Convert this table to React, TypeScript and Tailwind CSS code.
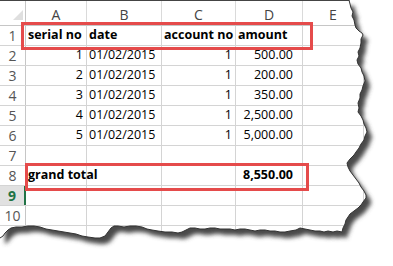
import React from "react";

const cols = [
  { w: "w-[61px]" },
  { w: "w-[75px]" },
  { w: "w-[74px]" },
  { w: "w-[67px]" },
  { w: "w-[61px]" },
];

type Cell = { t: string; align?: "l" | "r"; bold?: boolean; pr?: string };

const e: Cell = { t: "" };

const rows: Cell[][] = [
  [
    { t: "serial no", bold: true },
    { t: "date", bold: true },
    { t: "account no", bold: true },
    { t: "amount", bold: true },
    e,
  ],
  [{ t: "1", align: "r" }, { t: "01/02/2015" }, { t: "1", align: "r" }, { t: "500.00", align: "r", pr: "pr-[9px]" }, e],
  [{ t: "2", align: "r" }, { t: "01/02/2015" }, { t: "1", align: "r" }, { t: "200.00", align: "r", pr: "pr-[9px]" }, e],
  [{ t: "3", align: "r" }, { t: "01/02/2015" }, { t: "1", align: "r" }, { t: "350.00", align: "r", pr: "pr-[9px]" }, e],
  [{ t: "4", align: "r" }, { t: "01/02/2015" }, { t: "1", align: "r" }, { t: "2,500.00", align: "r", pr: "pr-[9px]" }, e],
  [{ t: "5", align: "r" }, { t: "01/02/2015" }, { t: "1", align: "r" }, { t: "5,000.00", align: "r", pr: "pr-[9px]" }, e],
  [e, e, e, e, e],
  [{ t: "grand total", bold: true }, e, e, { t: "8,550.00", align: "r", bold: true, pr: "pr-[9px]" }, e],
  [e, e, e, e, e],
  [e, e, e, e, e],
  [e, e, e, e, e],
];

const edge: [number, number][] = [
  [349, 0], [350, 4], [351, 8], [353, 12], [352, 16], [354, 20], [355, 25], [356, 28], [359, 31], [362, 33], [363, 35],
  [361, 39], [361, 43], [360, 48], [358, 52], [359, 56], [357, 60], [358, 64], [361, 68], [362, 72], [364, 76], [365, 81],
  [363, 86], [362, 90], [360, 94], [360, 98], [358, 103], [359, 108], [358, 112], [361, 116], [363, 120], [364, 124], [366, 128],
  [367, 132], [365, 136], [364, 140], [361, 144], [359, 148], [356, 152], [354, 155], [350, 159], [347, 163], [348, 167],
  [350, 171], [353, 175], [356, 179], [359, 183], [361, 187], [364, 191], [366, 195], [366, 198], [363, 202], [361, 205],
  [358, 208], [354, 211], [350, 214], [348, 217], [346, 220], [345, 224], [343, 228], [342, 232],
  [337, 231], [333, 232], [328, 231], [324, 232], [320, 231], [315, 231], [310, 230], [305, 229], [300, 228], [296, 230],
  [290, 231], [285, 232], [280, 232], [275, 231], [270, 231], [265, 230], [260, 230], [255, 231], [250, 230], [245, 229],
  [240, 229], [235, 230], [230, 229], [225, 229], [220, 229], [215, 228], [210, 228], [205, 229], [200, 229], [195, 228],
  [190, 228], [186, 230], [182, 232], [178, 233], [172, 232], [165, 232], [158, 231], [152, 230], [147, 229], [142, 227],
  [136, 226], [130, 226], [124, 227], [118, 226], [114, 226], [111, 228], [108, 232], [105, 236], [100, 238], [95, 238],
  [88, 237], [82, 236], [76, 234], [70, 233], [64, 232], [58, 231], [52, 230], [46, 229], [40, 227], [34, 226], [28, 226],
  [22, 227], [16, 227], [11, 228], [8, 230], [5, 233], [3, 236], [0, 238],
];

const paperPath = "M0,0 " + edge.map(([x, y]) => `L${x},${y}`).join(" ") + " Z";
const edgeLine = edge.map(([x, y], i) => `${i === 0 ? "M" : "L"}${x},${y}`).join(" ");

export default function App() {
  return (
    <div
      className="relative w-[393px] h-[266px] bg-white overflow-hidden"
      style={{ fontFamily: '"Open Sans", "Noto Sans", sans-serif' }}
    >
      <div className="border-t border-[#444444] flex flex-col">
        {/* column header row */}
        <div className="flex h-[25px] border-b border-[#c6c6c6]">
          <div className="relative w-[26px] border-r border-[#c6c6c6] shrink-0">
            <svg className="absolute left-0 top-0" width="25" height="24" viewBox="0 0 25 24">
              <polygon points="13,19 23,19 23,9" fill="#dfdfdf" />
            </svg>
          </div>
          {["A", "B", "C", "D", "E"].map((c, i) => (
            <div
              key={c}
              className={`${cols[i].w} shrink-0 border-r border-[#dadada] flex items-center justify-center text-[14px] text-[#444444] pt-[2px]`}
            >
              {c}
            </div>
          ))}
          <div className="flex-1" />
        </div>
        {rows.map((r, ri) => (
          <div key={ri} className="flex h-[20px] border-b border-[#d4d4d4]">
            <div
              className={`w-[26px] shrink-0 border-r flex items-center justify-center text-[14px] ${
                ri === 8
                  ? "border-r-[2px] border-[#217346] text-[#217346] font-bold bg-[#e1e1e1]"
                  : "border-[#c6c6c6] text-[#555555]"
              }`}
            >
              {ri + 1}
            </div>
            {r.map((c, ci) => (
              <div
                key={ci}
                className={`${cols[ci].w} shrink-0 border-r border-[#d4d4d4] flex items-center text-[12.5px] text-black leading-none whitespace-nowrap ${
                  c.align === "r" ? `justify-end ${c.pr ?? "pr-[3px]"}` : "justify-start pl-[2px]"
                } ${c.bold ? "font-bold" : ""}`}
              >
                {c.t}
              </div>
            ))}
            <div className="flex-1" />
          </div>
        ))}
      </div>

      {/* highlight boxes */}
      <div className="absolute left-[21px] top-[22px] w-[292px] h-[28px] border-[3px] border-[#e54b4b]" />
      <div className="absolute left-[25px] top-[163px] w-[284px] h-[28px] border-[3px] border-[#e54b4b]" />

      {/* torn paper edge */}
      <svg className="absolute left-0 top-0" width="393" height="266" viewBox="0 0 393 266">
        <defs>
          <filter id="blur" x="-20%" y="-20%" width="140%" height="140%">
            <feGaussianBlur stdDeviation="2.2" />
          </filter>
          <mask id="outside">
            <rect x="0" y="0" width="393" height="266" fill="white" />
            <path d={paperPath} fill="black" />
          </mask>
        </defs>
        <path d={`M0,0 H393 V266 H0 Z ${paperPath}`} fill="white" fillRule="evenodd" />
        <g mask="url(#outside)">
          <path d={paperPath} fill="#4a4a4a" transform="translate(5,6)" filter="url(#blur)" />
        </g>
        <path d={edgeLine} fill="none" stroke="#333333" strokeWidth="1" />
      </svg>
    </div>
  );
}
